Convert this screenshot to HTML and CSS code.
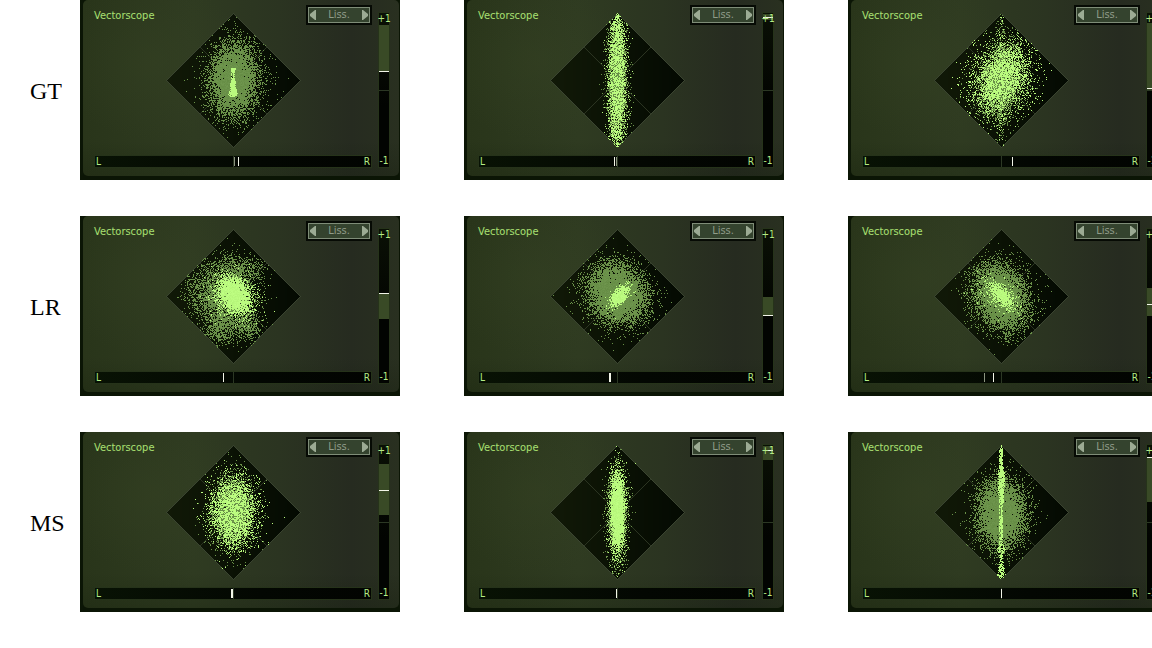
FILE: index.html
```html
<!DOCTYPE html>
<html lang="en">
<head>
<meta charset="utf-8">
<title>Vectorscope comparison</title>
<link rel="stylesheet" href="styles.css">
</head>
<body>
<main class="board">
  <section class="row"><h2 class="row-label">GT</h2></section>
  <section class="row"><h2 class="row-label">LR</h2></section>
  <section class="row"><h2 class="row-label">MS</h2></section>
</main>

<template id="panel">
  <article class="panel">
    <div class="face">
      <div class="scope">
        <header class="head">
          <h3 class="title">Vectorscope</h3>
          <div class="stepper">
            <button type="button" aria-label="Previous mode"><svg viewBox="0 0 6 10"><path d="M6 0v10H5L0 6V4L5 0z"/></svg></button>
            <span class="mode">Liss.</span>
            <button type="button" aria-label="Next mode"><svg viewBox="0 0 6 10"><path d="M0 0v10h1l5-4V4L1 0z"/></svg></button>
          </div>
        </header>
        <canvas class="plot" width="135" height="135"></canvas>
        <div class="pan" role="meter" aria-label="Balance"><span>L</span><span>R</span></div>
      </div>
      <div class="phase" role="meter" aria-label="Correlation"><span>+1</span><span>-1</span></div>
    </div>
  </article>
</template>
<script src="scope.js"></script>
</body>
</html>
```
FILE: styles.css
```css
* {
  box-sizing: border-box;
}

body {
  margin: 0;
  background: #fff;
  overflow-x: hidden;
}

.board {
  display: grid;
  gap: 36px;
}

.row {
  display: grid;
  grid-template-columns: 50px repeat(3, 320px);
  column-gap: 64px;
  align-items: center;
  margin-left: -34px;
}

.row-label {
  margin: 2px 0 0;
  padding-left: 64px;
  font: 24px/28px "Liberation Serif", serif;
  color: #000;
}

.panel {
  padding: 0 1px 4px 3px;
  background: #0b1505;
  font: 11px/14px "DejaVu Sans Condensed", "DejaVu Sans", sans-serif;
}

.face {
  display: grid;
  grid-template-columns: minmax(0, 1fr) 12px;
  column-gap: 6px;
  padding: 5px 9px 8px 11px;
  border-radius: 5px;
  background:
    radial-gradient(ellipse 30% 45% at 22% 35%, #37442466, #37442400),
    linear-gradient(180deg, #0000 80%, #0a140433),
    linear-gradient(90deg, #29351a 0%, #2f3b21 35%, #2b3421 62%, #262b20 85%, #293020 100%);
}

.scope {
  display: grid;
  grid-template-columns: minmax(0, 1fr);
  grid-template-rows: 150px 13px;
}

.head {
  grid-area: 1 / 1;
  display: flex;
  justify-content: space-between;
  align-items: start;
}

.title {
  margin: 4px 0 0;
  font: inherit;
  color: #a9e072;
}

.stepper {
  display: flex;
  justify-content: space-between;
  align-items: center;
  width: 66px;
  height: 20px;
  border: 2px solid #060a04;
  background: #34432e;
  box-shadow: inset 0 0 0 1px #7f8d78;
  color: #909c89;
}

.stepper button {
  display: flex;
  padding: 3px 2px;
  border: 0;
  background: none;
  color: #9cab94;
}

.stepper svg {
  width: 6px;
  height: 10px;
  fill: currentColor;
}

.plot {
  grid-area: 1 / 1;
  justify-self: center;
  margin-top: 8px;
  width: 135px;
  height: 135px;
}

.pan,
.phase {
  position: relative;
  display: flex;
  justify-content: space-between;
  border: 1px solid #26331a;
  background: #020601;
  color: #b4ec86;
  font-size: 10px;
}

.pan {
  grid-area: 2 / 1;
  padding: 0 1px;
  line-height: 12px;
  background: linear-gradient(90deg, #081204, #030702 60%, #020401);
}

.phase {
  flex-direction: column;
  align-items: center;
  margin-top: 7px;
  line-height: 12px;
  background: linear-gradient(#0a1005, #020401 60%);
}

.phase span,
.pan span {
  z-index: 1;
}

/* Centre ticks */
.pan::before,
.phase::before {
  content: "";
  position: absolute;
  background: #2c3824;
}

.pan::before {
  left: 50%;
  top: 0;
  bottom: 0;
  width: 1px;
}

.phase::before {
  top: 50%;
  left: 0;
  right: 0;
  height: 1px;
}

.range {
  position: absolute;
  left: 0;
  right: 0;
  background: #394a26;
}

.needle {
  position: absolute;
  background: #f2f5e8;
}

.pan .needle {
  top: 1px;
  bottom: 1px;
  width: 1px;
}

.pan .needle.wide {
  width: 2px;
}

.pan .needle.faded {
  background: #8b9480;
}

.phase .needle {
  left: 0;
  right: 0;
  height: 1px;
}
```
FILE: scope.js
```js
const MID = [106, 145, 73];
const BRIGHT = [186, 250, 126];
const HALF = 67;

// cloud: [colour, count, x, y, sigmaX, sigmaY, rotation in degrees]
// strip: [[y, half width, fill density], ...] joined from top to bottom
// pan:   [x, style], x is the offset from centre in track pixels
// phase: [range top, range bottom, needle], in track pixels from the top
const rows = [
  [
    {
      clouds: [[MID, 7000, 0, -1, 11, 18, 3], [MID, 900, 4, -2, 18, 21, 0]],
      strip: [[-12, 2, 1], [-8, 2, 1], [-4, 1.5, 1], [3, 2.5, 1], [9, 3, 1], [14, 4.5, 1], [16, 3, .8], [17, 1, .3]],
      pan: [[1, "faded"], [5, ""]], phase: [12, 58, 58]
    },
    {
      clouds: [[MID, 2600, 0, 0, 5, 34, 0], [BRIGHT, 3000, 0, 0, 3.5, 34, 0], [BRIGHT, 500, 0, 0, 6, 36, 0], [MID, 500, 0, 0, 6, 30, 0]],
      pan: [[-3, ""], [-1, "faded"]], phase: [1, 7, 4]
    },
    {
      clouds: [[MID, 3000, 0, 0, 13, 19, 15], [MID, 700, 0, 0, 3, 28, 0], [BRIGHT, 2600, 1, -3, 9, 15, 25],
        [BRIGHT, 1000, 0, 0, 19, 19, 0], [BRIGHT, 120, 0, 0, 2, 34, 0], [MID, 500, 0, 0, 12, 20, 0]],
      pan: [[11, ""]], phase: [10, 77, 75]
    }
  ],
  [
    {
      clouds: [[MID, 2800, -1, 0, 13, 18, 0], [MID, 1500, -24, 0, 12, 17, -25], [MID, 400, -14, 34, 8, 7, 0], [MID, 400, 14, 30, 8, 8, 0],
        [MID, 500, 6, -28, 15, 7, 0], [BRIGHT, 2400, 1, -1, 7, 10, -38], [BRIGHT, 300, -1, 0, 13, 12, 0]],
      pan: [[-10, ""]], phase: [64, 90, 64]
    },
    {
      clouds: [[MID, 8000, 0, -3, 13, 15, -45], [MID, 700, -1, -2, 20, 19, 0], [BRIGHT, 700, 2, 0, 3, 6, 40], [BRIGHT, 35, 8, -8, 4, 4, 0]],
      pan: [[-8, "wide"]], phase: [68, 86, 86]
    },
    {
      clouds: [[MID, 7000, -1, 0, 12, 16, -25], [MID, 800, 0, 0, 18, 20, 0], [BRIGHT, 650, 1, 0, 4, 8, -45], [BRIGHT, 160, -4, -3, 12, 9, 30]],
      pan: [[-17, "faded"], [-8, ""]], phase: [59, 87, 75]
    }
  ],
  [
    {
      clouds: [[MID, 3600, 0, 0, 11, 18, 0], [BRIGHT, 3000, 0, -1, 9, 14, 0], [BRIGHT, 800, 1, 0, 14, 19, 0], [MID, 500, 0, 0, 10, 18, 0]],
      pan: [[-2, "wide"]], phase: [19, 70, 45]
    },
    {
      clouds: [[MID, 2600, 0, 2, 5, 23, 0], [BRIGHT, 3200, 0, -1, 3.2, 17, 0], [BRIGHT, 400, 0, 0, 5, 26, 0]],
      pan: [[-1, ""]], phase: [1, 15, 5]
    },
    {
      clouds: [[MID, 6800, 0, 1, 11, 16, 0], [MID, 900, 0, 0, 15, 21, 0]],
      strip: [[-67, 1, .6], [-62, 1.5, 1], [-45, 2, 1], [-38, 3.5, .9], [-25, 3, .9], [-8, 2, .9], [15, 1.5, 1], [33, 2, .9],
        [37, 4, .6], [42, 1.5, .6], [54, 2.5, .7], [62, 4.5, .6], [67, 1, .6]],
      pan: [[0, ""]], phase: [12, 57, 12]
    }
  ]
];

let seed = 20240;
function random() {
  seed = (seed + 0x6d2b79f5) | 0;
  let t = Math.imul(seed ^ (seed >>> 15), 1 | seed);
  t = (t + Math.imul(t ^ (t >>> 7), 61 | t)) ^ t;
  return (((t ^ (t >>> 14)) >>> 0) + 1) / 4294967297;
}

function gauss() {
  return Math.sqrt(-2 * Math.log(random())) * Math.cos(2 * Math.PI * random());
}

function plot(canvas, data) {
  const size = 2 * HALF + 1;
  const ctx = canvas.getContext("2d");
  const image = ctx.createImageData(size, size);
  const set = (dx, dy, colour) => {
    const i = ((dy + HALF) * size + dx + HALF) * 4;
    image.data[i] = colour[0];
    image.data[i + 1] = colour[1];
    image.data[i + 2] = colour[2];
    image.data[i + 3] = 255;
  };
  const inside = (dx, dy) => Math.abs(dx) + Math.abs(dy) <= HALF;

  for (let dy = -HALF; dy <= HALF; dy++) {
    for (let dx = -HALF; dx <= HALF; dx++) {
      if (!inside(dx, dy)) continue;
      const fade = (dx + HALF) / (size - 1);
      set(dx, dy, [17 - 13 * fade, 25 - 15 * fade, 7 - 5 * fade]);
      if (Math.abs(dx) === Math.abs(dy)) set(dx, dy, [43, 52, 33]);
      if (Math.abs(dx) + Math.abs(dy) === HALF) set(dx, dy, [58, 68, 48]);
    }
  }

  for (const [colour, count, cx, cy, sx, sy, angle] of data.clouds) {
    const a = angle * Math.PI / 180;
    for (let n = 0; n < count; n++) {
      const u = gauss() * sx, v = gauss() * sy;
      const dx = Math.round(cx + u * Math.cos(a) - v * Math.sin(a));
      const dy = Math.round(cy + u * Math.sin(a) + v * Math.cos(a));
      if (!inside(dx, dy)) continue;
      const shift = Math.round((random() - .5) * 10);
      set(dx, dy, colour.map(k => k + shift));
    }
  }

  const strip = data.strip || [];
  for (let s = 1; s < strip.length; s++) {
    const [y0, w0, f0] = strip[s - 1], [y1, w1, f1] = strip[s];
    for (let y = y0; y < y1; y++) {
      const t = (y - y0) / (y1 - y0);
      const w = w0 + (w1 - w0) * t, f = f0 + (f1 - f0) * t;
      for (let x = -Math.round(w); x <= w; x++) {
        const edge = Math.abs(x) > w - 1 ? .65 : 1;
        if (inside(x, y) && random() < f * edge) set(x, y, BRIGHT);
      }
    }
  }
  ctx.putImageData(image, 0, 0);
}

function mark(parent, className, style) {
  const el = document.createElement("i");
  el.className = className;
  Object.assign(el.style, style);
  parent.append(el);
}

const template = document.getElementById("panel");
document.querySelectorAll(".row").forEach((row, r) => {
  rows[r].forEach(data => {
    const panel = template.content.cloneNode(true);
    plot(panel.querySelector("canvas"), data);
    const pan = panel.querySelector(".pan");
    data.pan.forEach(([x, kind]) => mark(pan, "needle " + kind, { left: 50 + x / 2.76 + "%" }));
    const phase = panel.querySelector(".phase");
    const [top, bottom, needle] = data.phase.map(y => y / 1.54);
    mark(phase, "range", { top: top + "%", height: bottom - top + "%" });
    mark(phase, "needle", { top: needle + "%" });
    row.append(panel);
  });
});
```
